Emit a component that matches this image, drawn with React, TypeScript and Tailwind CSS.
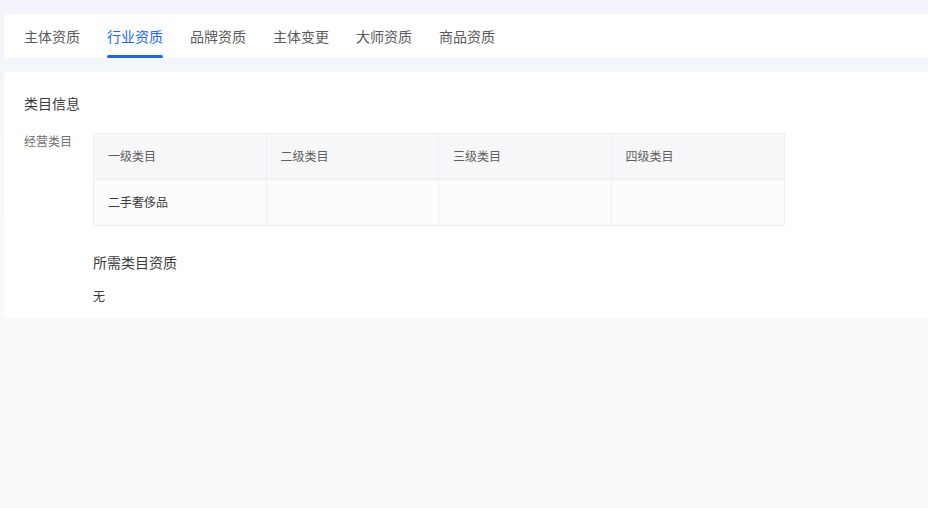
import React, { useState } from 'react';

const tabs = ['主体资质', '行业资质', '品牌资质', '主体变更', '大师资质', '商品资质'];
const levels = ['一级类目', '二级类目', '三级类目', '四级类目'];
const rows = [['二手奢侈品', '', '', '']];

export default function App() {
  const [active, setActive] = useState(1);

  return (
    <div
      className="h-[508px] w-[928px] overflow-hidden bg-gradient-to-b from-[#f2f5fc] to-[#f8f9fb] to-60% pl-1 pt-[14px]"
      style={{ fontFamily: '"Noto Sans CJK SC", "Noto Sans", sans-serif' }}
    >
      {/* Tabs */}
      <div className="flex h-[44px] gap-[27px] rounded-l bg-white pl-5">
        {tabs.map((tab, i) => (
          <button
            key={tab}
            onClick={() => setActive(i)}
            className={`relative flex h-full items-center text-[14px] leading-none ${
              active === i ? 'text-[#1966ff]' : 'text-[#5a5a5a]'
            }`}
          >
            {tab}
            {active === i && (
              <span className="absolute bottom-0 left-0 right-0 h-[3px] rounded-full bg-[#1966ff]" />
            )}
          </button>
        ))}
      </div>

      {/* Category info */}
      <div className="mt-[14px] h-[246px] rounded-l bg-white pl-5 pt-[21px]">
        <div className="text-[14px] leading-[20px] text-[#3a3a3a]">类目信息</div>

        <div className="mt-[20px] flex">
          <div className="w-[69px] pt-[1px] text-[12px] leading-[14px] text-[#707070]">经营类目</div>
          <div>
            <div className="w-[692px] border border-[#eef0f3]">
              <div className="grid grid-cols-4 bg-[#f6f7f9]">
                {levels.map((l, i) => (
                  <div
                    key={l}
                    className={`flex h-[45px] items-center pb-[1px] pl-[14px] text-[12px] text-[#5e5e5e] ${
                      i < 3 ? 'border-r border-[#eef0f3]' : ''
                    }`}
                  >
                    {l}
                  </div>
                ))}
              </div>
              {rows.map((r, ri) => (
                <div key={ri} className="grid grid-cols-4 border-t border-[#eef0f3] bg-[#fcfcfd]">
                  {r.map((c, i) => (
                    <div
                      key={i}
                      className={`flex h-[45px] items-center pb-[1px] pl-[14px] text-[12px] text-[#3a3a3a] ${
                        i < 3 ? 'border-r border-[#eef0f3]' : ''
                      }`}
                    >
                      {c}
                    </div>
                  ))}
                </div>
              ))}
            </div>

            <div className="mt-[26px] text-[14px] leading-[20px] text-[#3a3a3a]">所需类目资质</div>
            <div className="mt-[16px] text-[12px] leading-[16px] text-[#3a3a3a]">无</div>
          </div>
        </div>
      </div>
    </div>
  );
}
